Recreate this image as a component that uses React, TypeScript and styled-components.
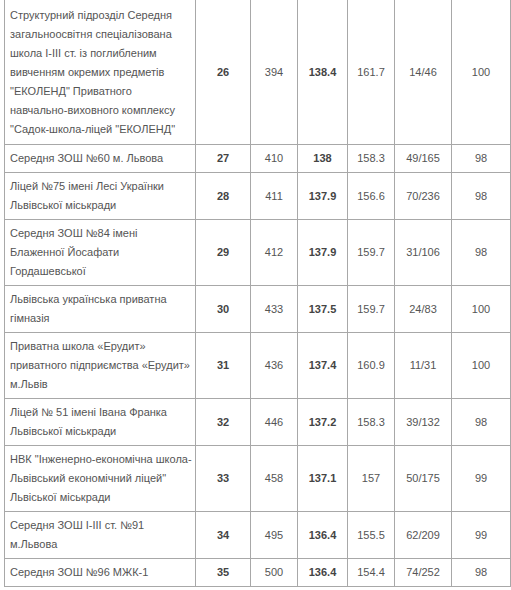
import styled, { createGlobalStyle } from 'styled-components'

const GlobalStyle = createGlobalStyle`
  html, body {
    margin: 0;
    padding: 0;
    background: #fff;
  }
`;

const Page = styled.div`
  padding: 0 0 0 4px;
  overflow: hidden;
`;

const Table = styled.table`
  border-collapse: collapse;
  table-layout: fixed;
  width: 506px;
  margin-top: -1px;
  font-family: "Liberation Sans", Arial, sans-serif;
  font-size: 11px;
  line-height: 19px;
  color: #555;
`;

const Row = styled.tr<{ $tall?: boolean }>`
  td {
    padding-top: ${props => props.$tall ? '5.5px' : '4px'};
    padding-bottom: ${props => props.$tall ? '5.5px' : '4px'};
  }
`;

const Cell = styled.td<{ $bold?: boolean; $left?: boolean }>`
  border: 1px solid #a8a8a8;
  padding: 4px 5px;
  vertical-align: middle;
  white-space: nowrap;
  text-align: ${props => props.$left ? 'left' : 'center'};
  font-weight: ${props => props.$bold ? 'bold' : 'normal'};
  color: ${props => props.$bold ? '#444' : '#555'};
`;

interface School {
  name: string[];
  place: string;
  count: string;
  score: string;
  max: string;
  ratio: string;
  percent: string;
}

const schools: School[] = [
  {
    name: [
      'Структурний підрозділ Середня',
      'загальноосвітня спеціалізована',
      'школа І-ІІІ ст. із поглибленим',
      'вивченням окремих предметів',
      '"ЕКОЛЕНД" Приватного',
      'навчально-виховного комплексу',
      '"Садок-школа-ліцей "ЕКОЛЕНД"',
    ],
    place: '26', count: '394', score: '138.4', max: '161.7', ratio: '14/46', percent: '100',
  },
  { name: ['Середня ЗОШ №60 м. Львова'], place: '27', count: '410', score: '138', max: '158.3', ratio: '49/165', percent: '98' },
  { name: ['Ліцей №75 імені Лесі Українки', 'Львівської міськради'], place: '28', count: '411', score: '137.9', max: '156.6', ratio: '70/236', percent: '98' },
  { name: ['Середня ЗОШ №84 імені', 'Блаженної Йосафати', 'Гордашевської'], place: '29', count: '412', score: '137.9', max: '159.7', ratio: '31/106', percent: '98' },
  { name: ['Львівська українська приватна', 'гімназія'], place: '30', count: '433', score: '137.5', max: '159.7', ratio: '24/83', percent: '100' },
  { name: ['Приватна школа «Ерудит»', 'приватного підприємства «Ерудит»', 'м.Львів'], place: '31', count: '436', score: '137.4', max: '160.9', ratio: '11/31', percent: '100' },
  { name: ['Ліцей № 51 імені Івана Франка', 'Львівської міськради'], place: '32', count: '446', score: '137.2', max: '158.3', ratio: '39/132', percent: '98' },
  { name: ['НВК "Інженерно-економічна школа-', 'Львівський економічний ліцей"', 'Львіської міськради'], place: '33', count: '458', score: '137.1', max: '157', ratio: '50/175', percent: '99' },
  { name: ['Середня ЗОШ І-ІІІ ст. №91', 'м.Львова'], place: '34', count: '495', score: '136.4', max: '155.5', ratio: '62/209', percent: '99' },
  { name: ['Середня ЗОШ №96 МЖК-1'], place: '35', count: '500', score: '136.4', max: '154.4', ratio: '74/252', percent: '98' },
];

const widths = [191, 55, 47, 50, 47, 57, 59];

const App = () => {
  return (
    <>
      <GlobalStyle />
      <Page>
        <Table>
          <colgroup>
            {widths.map((w, i) => <col key={i} style={{ width: w }} />)}
          </colgroup>
          <tbody>
            {schools.map((s, index) => (
              <Row key={index} $tall={index === 0}>
                <Cell $left>
                  {s.name.map((line, i) => (
                    <span key={i}>{line}{i < s.name.length - 1 && <br />}</span>
                  ))}
                </Cell>
                <Cell $bold>{s.place}</Cell>
                <Cell>{s.count}</Cell>
                <Cell $bold>{s.score}</Cell>
                <Cell>{s.max}</Cell>
                <Cell>{s.ratio}</Cell>
                <Cell>{s.percent}</Cell>
              </Row>
            ))}
          </tbody>
        </Table>
      </Page>
    </>
  )
}

export default App;
